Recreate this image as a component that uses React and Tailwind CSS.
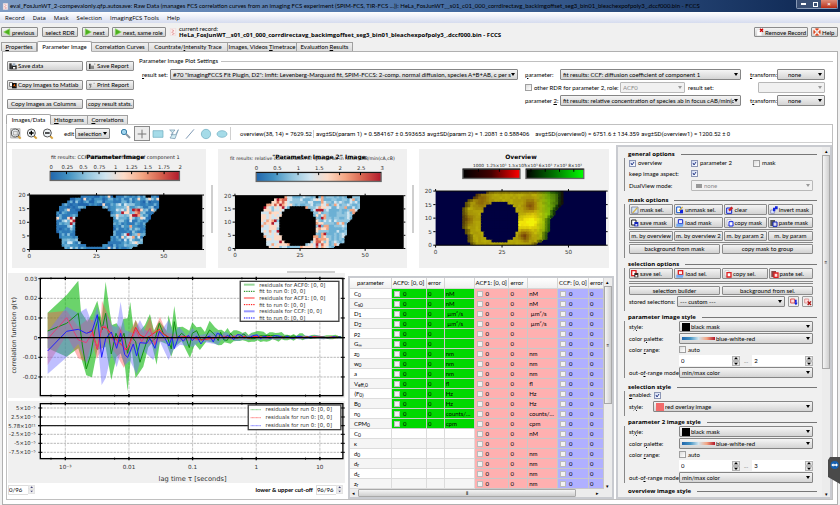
import React, { useId } from "react";

const RAMP = ["#2166ac", "#2f7ab8", "#4393c3", "#6cb0d4", "#92c5de", "#d1e5f0", "#fddbc7", "#f4a582", "#d6604d", "#b2182b"];
const LEFT = [19, 15, 14, 12, 11, 11, 10, 10, 10, 10, 10, 10, 10, 10, 11, 11, 12, 12, 12, 13];
const RIGHT = [48, 48, 48, 48, 48, 47, 46, 45, 45, 44, 43, 43, 43, 43, 43, 42, 42, 42, 40, 38];

function noise(a, b, seed) {
  const s = Math.sin(a * 127.1 + b * 311.7 + seed * 74.7) * 43758.5453;
  return s - Math.floor(s);
}

function inHole(c, r) {
  const dx = (c + 0.5 - 24) / 7.5;
  const dy = (r + 0.5 - 11.5) / 7.6;
  return dx * dx + dy * dy < 1;
}

function spot(c, r, x, y, s) {
  return Math.exp(-((c - x) ** 2 + (r - y) ** 2) / (s * s));
}

function diffusionCell(c, r) {
  const n = noise(c, r, 1);
  let v = 0.9 + n * n * 3.6;
  if (n > 0.96) v += 2;
  v += 8 * spot(c, r, 39, 6, 2.4) * (0.4 + n) + 8 * spot(c, r, 15, 9, 1.8) * (0.3 + n) + 6 * spot(c, r, 37, 14, 2) * n;
  v += 2.4 * spot(c, r, 33, 7, 3) + 2 * spot(c, r, 14, 18, 3) + 2.4 * spot(c, r, 38, 17, 3) + 2 * spot(c, r, 34, 4, 2);
  return RAMP[Math.min(9, Math.floor(v))];
}

function concentrationCell(c, r) {
  const n = noise(c, r, 5);
  let v = c < 20 ? 4.8 + n * 2.6 : 3 + n * 2.5;
  if (r < 4 && c < 22) v += 1.2;
  if (r > 15 && c < 36 && c > 25) v += 1.5;
  if (c > 30 && c < 35) v += n * 2.4;
  if (n > 0.96) v += 2;
  return RAMP[Math.min(9, Math.floor(v))];
}

function overviewCell(c, r) {
  const n = noise(c, r, 9);
  let g = 0.6 + n * 0.08;
  let red = 0.66 + n * 0.06;
  const edge = Math.min(c - LEFT[r], RIGHT[r] - 1 - c, r + 1);
  if (edge < 2) {
    g *= 0.5 + edge * 0.22;
    red *= 0.55 + edge * 0.2;
  }
  const glow = 0.28 * spot(c, r, 35, 11, 2.6) + 0.22 * spot(c, r, 31, 12, 2) + 0.12 * spot(c, r, 38, 9, 6);
  g += glow;
  red += glow;
  const dark = 0.35 * spot(c, r, 35, 5, 2.5) + 0.38 * spot(c, r, 33, 16, 2) + 0.25 * spot(c, r, 17, 3, 3) + 0.2 * spot(c, r, 12, 10, 2);
  g -= dark;
  red -= dark * 0.6;
  if (c > 37) red -= (c - 37) * 0.055;
  if (c > 42) g -= (c - 42) * 0.07;
  const k = (t) => Math.round(255 * Math.max(0.08, Math.min(0.95, t)));
  return `rgb(${k(red)},${k(g)},8)`;
}

function Cells({ x, y, w, h, color, ragged, hole = "#000" }) {
  const cw = w / 64;
  const ch = h / 20;
  const out = [];
  for (let r = 0; r < 20; r++) {
    for (let c = LEFT[r]; c < RIGHT[r]; c++) {
      const gap = inHole(c, r) || (ragged && r === 0 && (c === 31 || c === 43 || c === 44));
      out.push(
        <rect
          key={r * 64 + c}
          x={x + c * cw}
          y={y + r * ch}
          width={c === RIGHT[r] - 1 ? cw : cw + 3}
          height={r === 19 || c < LEFT[r + 1] || c >= RIGHT[r + 1] ? ch : ch + 3}
          fill={gap ? hole : color(c, r)}
        />
      );
    }
  }
  return <g>{out}</g>;
}

function PlotAxes({ x, y, w, h, step }) {
  const xs = [0, 25, 50];
  const ys = [20, 15, 10, 5, 0];
  return (
    <g fontSize="17" fill="#333">
      <path d={`M${x} ${y}H${x + w}M${x} ${y + h}H${x + w}`} stroke="#000" strokeWidth="3" />
      {xs.map((t) => (
        <g key={t}>
          <path d={`M${x + t * step} ${y - 6}v6M${x + t * step} ${y + h}v7`} stroke="#000" strokeWidth="3" />
          <text x={x + t * step} y={y + h + 27} textAnchor="middle">{t}</text>
        </g>
      ))}
      {ys.map((t, i) => (
        <g key={t}>
          <path d={`M${x - 7} ${y + (h * i) / 4}h7M${x + w} ${y + (h * i) / 4}h5`} stroke="#000" strokeWidth="3" />
          <text x={x - 11} y={y + (h * i) / 4 + 6} textAnchor="end">{t}</text>
        </g>
      ))}
    </g>
  );
}

function RampBar({ id, x, y, w, h, colors, ticks }) {
  return (
    <g>
      <defs>
        <linearGradient id={id}>
          {colors.map((c, i) => <stop key={i} offset={i / (colors.length - 1)} stopColor={c} />)}
        </linearGradient>
      </defs>
      <rect x={x} y={y} width={w} height={h} fill={`url(#${id})`} stroke="#666" strokeWidth="4" />
      <path d={`M${x} ${y}H${x + w}`} stroke="#111" strokeWidth="3" />
      {ticks.map((t) => <path key={t} d={`M${t} ${y}v8`} stroke="#000" strokeWidth="3" />)}
    </g>
  );
}

const BWR = ["#2166ac", "#4393c3", "#92c5de", "#d1e5f0", "#fddbc7", "#f4a582", "#d6604d", "#b2182b"];
const PLOT_FONT = "font-['DejaVu_Sans',sans-serif]";

function ParameterPlot() {
  const labels = ["0", "0.25", "0.5", "0.75", "1", "1.25", "1.5", "1.75", "2"];
  return (
    <svg viewBox="36 14 585 357" className={`block h-[119px] w-full ${PLOT_FONT}`} role="img" aria-label="Parameter Image">
      <text x="347" y="44" textAnchor="middle" fontSize="15" fill="#222">fit results: CCF: diffusion coefficient of component 1</text>
      <text x="347" y="44" textAnchor="middle" fontSize="18" fontWeight="bold">Parameter Image</text>
      <g fontSize="16" fill="#333">
        {labels.map((t, i) => <text key={t} x={154 + i * 48.5} y="74" textAnchor="middle">{t}</text>)}
      </g>
      <RampBar id="ramp-a" x={151} y={81} w={389} h={27} colors={BWR} ticks={[200, 249, 298, 347, 396, 445, 494]} />
      <rect x="88" y="152" width="521" height="164" />
      <Cells x={88} y={152} w={521} h={164} color={diffusionCell} ragged />
      <PlotAxes x={88} y={152} w={521} h={164} step={8.1} />
    </svg>
  );
}

function Parameter2Plot() {
  const labels = ["0", "0.5", "1", "1.5", "2", "2.5", "3"];
  return (
    <svg viewBox="654 14 567 357" className={`block h-[119px] w-full ${PLOT_FONT}`} role="img" aria-label="Parameter Image 2">
      <text x="690" y="48" fontSize="14" fill="#222">fit results: relative concentration of species ab in focus cAB/min(cA,cB)</text>
      <text x="958" y="45" textAnchor="middle" fontSize="18" fontWeight="bold">"Parameter Image 2" Image</text>
      <g fontSize="16" fill="#333">
        {labels.map((t, i) => <text key={t} x={770 + i * 63} y="77" textAnchor="middle">{t}</text>)}
      </g>
      <RampBar id="ramp-b" x={769} y={84} w={376} h={27} colors={BWR} ticks={[832, 895, 957, 1020, 1083]} />
      <rect x="705" y="154" width="508" height="159" />
      <Cells x={705} y={154} w={502} h={159} color={concentrationCell} ragged />
      <PlotAxes x={705} y={154} w={508} h={159} step={7.84} />
    </svg>
  );
}

function OverviewPlot() {
  return (
    <svg viewBox="327 14 573 357" className={`block h-[119px] w-full ${PLOT_FONT}`} role="img" aria-label="Overview">
      <text x="634" y="44" textAnchor="middle" fontSize="18" fontWeight="bold">Overview</text>
      <g fontSize="13" fill="#222" textAnchor="middle">
        <text x="506" y="67">1000</text>
        <text x="560" y="67">1.25×10³</text>
        <text x="622" y="67">1.5×10³</text>
        <text x="664" y="67">5×10³</text>
        <text x="708" y="67">6×10³</text>
        <text x="752" y="67">7×10³</text>
        <text x="797" y="67">8×10³</text>
      </g>
      <RampBar id="ramp-r" x={459} y={74} w={172} h={28} colors={["#000", "#400", "#f00"]} ticks={[506, 569]} />
      <RampBar id="ramp-g" x={649} y={74} w={174} h={28} colors={["#000", "#070", "#0f0"]} ticks={[664, 707, 750, 793]} />
      <rect x="377" y="140" width="513" height="163" fill="#000040" />
      <Cells x={377} y={140} w={513} h={163} color={overviewCell} hole="#000040" />
      <PlotAxes x={377} y={140} w={513} h={163} step={8} />
    </svg>
  );
}

/* Residual band outlines: upper edge, lower edge and centre curve of each channel. */
const GREEN_UP = "143,128 200,75 235,32 243,125 262,155 276,130 292,92 305,150 317,35 330,130 336,165 350,160 362,178 370,147 383,145 391,96 400,172 407,150 420,182 435,165 450,132 462,182 478,152 500,182 506,135 515,172 523,108 532,172 548,170 568,182 577,157 590,172 603,170 615,186 629,152 645,172 655,180";
const GREEN_DN = "655,226 640,218 620,214 600,240 585,222 570,264 545,214 523,232 514,260 500,222 480,214 470,284 455,220 445,232 430,290 407,325 395,240 383,364 375,290 362,250 350,260 334,330 317,230 292,240 276,322 259,316 235,235 200,260 143,235";
const BLUE_UP = "143,185 200,110 235,130 259,115 276,160 292,110 305,170 317,125 335,165 350,172 362,95 375,180 400,190 420,150 435,180 460,190 480,188 506,150 520,190 538,170 560,198 577,175 600,195 655,184";
const BLUE_DN = "655,224 600,214 580,230 540,224 520,240 506,270 480,215 460,270 430,242 410,312 390,272 375,286 362,250 350,292 335,250 317,325 305,345 292,205 276,252 259,280 235,222 200,262 143,312";
const RED_UP = "143,128 200,122 235,170 262,148 280,150 300,190 306,92 330,150 345,202 360,165 380,205 407,150 430,188 450,142 462,185 480,140 500,188 540,195 600,198 655,196";
const RED_DN = "655,210 600,212 540,212 500,210 450,222 410,222 390,250 372,294 350,255 320,215 290,266 276,214 259,276 235,265 200,195 143,285";

function tail(amp, seed, dir) {
  const pts = [];
  for (let x = 665; x <= 1025; x += 9) {
    const a = amp * Math.exp(-(x - 665) / 190) + 2;
    pts.push(`${x},${Math.round(203 + dir * a * (0.4 + noise(x, seed, 3)))}`);
  }
  return pts;
}

function band(up, dn, amp, seed) {
  return `${up} ${tail(amp, seed, -1).join(" ")} ${tail(amp * 0.6, seed + 1, 1).reverse().join(" ")} ${dn}`;
}

function curveTail(amp, seed) {
  const pts = [];
  for (let x = 662; x <= 1025; x += 10) {
    const a = amp * Math.exp(-(x - 662) / 160) + 1;
    pts.push(`${x},${Math.round(202 + a * (noise(x, seed, 2) - 0.6) * 2)}`);
  }
  return pts.join(" ");
}

const DECADES = [196, 387, 578, 769, 960];
const MINORS = [153, 344, 535, 726, 917];

function Frame({ y, h }) {
  return (
    <g>
      <rect x="121" y={y} width="908" height={h} fill="none" stroke="#000" strokeWidth="4" />
      {DECADES.map((x) => <path key={x} d={`M${x} ${y - 5}v10M${x} ${y + h - 5}v10`} stroke="#000" strokeWidth="4" />)}
      {MINORS.map((x) => <path key={x} d={`M${x} ${y - 3}v6M${x} ${y + h - 3}v6`} stroke="#000" strokeWidth="3" />)}
    </g>
  );
}

function CorrelationPlot() {
  const yTicks = [["0.03", 26], ["0.02", 85], ["0.01", 144], ["0", 203], ["-0.01", 262], ["-0.02", 321]];
  const legend = [
    ["residuals for ACF0: [0, 0]", "#99d699", 6, null],
    ["fit to run 0: [0, 0]", "#008000", 3, "4 3"],
    ["residuals for ACF1: [0, 0]", "#ff9999", 6, null],
    ["fit to run 0: [0, 0]", "#ff0000", 3, "4 3"],
    ["residuals for CCF: [0, 0]", "#9999ff", 6, null],
    ["fit to run 0: [0, 0]", "#0000ff", 3, "4 3"],
  ];
  return (
    <svg viewBox="24 9 1011 375" className={`block h-auto w-full ${PLOT_FONT}`} role="img" aria-label="correlation function">
      <rect x="24" y="9" width="1011" height="375" fill="#f0f0f0" />
      <rect x="121" y="25" width="908" height="352" fill="#fff" />
      <path d={DECADES.map((x) => `M${x} 25V377`).join("")} stroke="#c4c4c4" strokeWidth="3" strokeDasharray="9 3" />
      <path d={yTicks.map(([, y]) => `M121 ${y}H1029`).join("")} stroke="#b8b8b8" strokeWidth="3" strokeDasharray="7 3" />
      <polygon points={band(GREEN_UP, GREEN_DN, 26, 1)} fill="#00b400" fillOpacity="0.58" />
      <polygon points={band(RED_UP, RED_DN, 7, 5)} fill="#ff5050" fillOpacity="0.42" />
      <polygon points={band(BLUE_UP, BLUE_DN, 13, 8)} fill="#7070ff" fillOpacity="0.45" />
      <g fill="none" strokeWidth="3">
        <polyline stroke="#109010" points={`143,183 200,160 235,130 247,225 259,297 272,255 285,180 297,140 306,180 317,130 334,252 348,190 360,215 372,190 383,250 395,200 407,215 420,277 432,240 445,200 456,215 466,205 478,160 490,190 502,200 514,237 523,155 532,205 545,190 557,200 568,233 577,190 590,182 603,210 615,205 629,180 645,195 655,212 ${curveTail(12, 4)}`} />
        <polyline stroke="#ff2020" points={`262,190 276,180 292,238 306,170 320,175 345,205 380,240 393,210 400,190 407,172 420,195 440,205 478,178 490,192 510,204 560,200 605,210 655,202 ${curveTail(3, 8)}`} />
        <polyline stroke="#e0407a" points="143,207 200,143 235,210 259,218 276,190 292,236 306,170 317,168 332,200 350,225 362,180 374,240 386,230 407,180 425,215 450,175 465,225 480,180" />
        <polyline stroke="#2020ff" points={`143,243 200,184 235,178 259,190 276,184 292,134 305,262 317,206 334,186 350,235 362,190 374,253 383,263 400,222 410,258 420,218 440,220 450,206 465,235 478,184 495,205 507,228 516,200 523,236 537,198 550,214 565,196 577,212 590,198 603,222 615,205 629,198 640,216 652,190 ${curveTail(10, 2)}`} />
      </g>
      <path d="M114 203H1035" stroke="#000" strokeWidth="4" />
      <Frame y={25} h={352} />
      <g fontSize="17" fill="#333" textAnchor="end">
        {yTicks.map(([t, y]) => (
          <g key={t}>
            <path d={`M115 ${y}h12M1023 ${y}h12`} stroke="#000" strokeWidth="3" />
            <text x="112" y={y + 6}>{t}</text>
          </g>
        ))}
      </g>
      <text transform="translate(47 196) rotate(-90)" textAnchor="middle" fontSize="19" fill="#333">correlation function g(τ)</text>
      <rect x="721" y="34" width="296" height="120" fill="#fff" stroke="#444" strokeWidth="4" />
      <g fontSize="16" fill="#333">
        {legend.map(([t, color, sw, dash], i) => (
          <g key={i}>
            <path d={`M732 ${44 + i * 20}h32`} stroke={color} strokeWidth={sw} strokeDasharray={dash || undefined} />
            <text x="778" y={50 + i * 20}>{t}</text>
          </g>
        ))}
      </g>
    </svg>
  );
}

function ResidualPlot() {
  const yTicks = [["5×10⁻⁵", 39], ["2.5×10⁻⁵", 66], ["5.78×10²¹", 92], ["-2.5×10⁻⁵", 118], ["-5×10⁻⁵", 145], ["-7.5×10⁻⁵", 172]];
  const xLabels = ["10⁻³", "0.01", "0.1", "1", "10"];
  const legend = ["#99d699", "#ff9999", "#9999ff"];
  return (
    <svg viewBox="24 18 1011 246" className={`block h-auto w-full ${PLOT_FONT}`} role="img" aria-label="residuals">
      <rect x="24" y="18" width="1011" height="246" fill="#f0f0f0" />
      <rect x="121" y="26" width="908" height="165" fill="#fff" />
      <path d={DECADES.map((x) => `M${x} 26V191`).join("")} stroke="#c4c4c4" strokeWidth="3" strokeDasharray="9 3" />
      <path d={yTicks.map(([, y]) => `M121 ${y}H1029`).join("")} stroke="#b8b8b8" strokeWidth="3" strokeDasharray="7 3" />
      <path d="M114 92H1029" stroke="#222" strokeWidth="4" />
      <Frame y={26} h={165} />
      <g fontSize="16" fill="#333" textAnchor="end">
        {yTicks.map(([t, y]) => (
          <g key={t}>
            <path d={`M115 ${y}h12M1023 ${y}h12`} stroke="#000" strokeWidth="3" />
            <text x="107" y={y + 6}>{t}</text>
          </g>
        ))}
      </g>
      <g fontSize="17" fill="#333" textAnchor="middle">
        {xLabels.map((t, i) => <text key={t} x={DECADES[i]} y="222">{t}</text>)}
        <text x="578" y="257" fontSize="20">lag time τ [seconds]</text>
      </g>
      <rect x="745" y="30" width="278" height="74" fill="#fff" stroke="#444" strokeWidth="4" />
      <g fontSize="16" fill="#333">
        {legend.map((color, i) => (
          <g key={color}>
            <path d={`M752 ${44 + i * 24}h32`} stroke={color} strokeWidth="4" strokeDasharray="3 1" />
            <text x="797" y={48 + i * 24}>residuals for run 0: [0, 0]</text>
          </g>
        ))}
      </g>
    </svg>
  );
}

/* "&" before a letter marks its keyboard mnemonic. */
function Mn({ children }) {
  const i = children.indexOf("&");
  if (i < 0) return <span>{children}</span>;
  return <span>{children.slice(0, i)}<u>{children[i + 1]}</u>{children.slice(i + 2)}</span>;
}

function Btn({ children, icon, className = "" }) {
  return (
    <button type="button" className={`flex items-center gap-px overflow-hidden whitespace-nowrap rounded-[1px] border border-[#8b8b8b] bg-linear-to-b from-[#f4f4f4] to-[#d2d2d2] px-px ${className}`}>
      {icon}
      <span>{children}</span>
    </button>
  );
}

function Arrow({ muted }) {
  return (
    <svg viewBox="0 0 4 3" className="pointer-events-none h-[3px] w-[4px] shrink-0" aria-hidden="true">
      <path d="M0 0h4L2 3z" fill={muted ? "#999" : "#000"} />
    </svg>
  );
}

function Combo({ id, label, value, disabled, swatch, className = "" }) {
  return (
    <span className={`flex h-[11px] min-w-0 items-center rounded-[1px] border px-[2px] ${disabled ? "border-[#b8b8b8] bg-[#f1f1f1] text-[#8a8a8a]" : "border-[#858585] bg-linear-to-b from-[#f5f5f5] to-[#d4d4d4]"} ${className}`}>
      {swatch}
      <select id={id} aria-label={label} disabled={disabled} defaultValue={value} className="h-[9px] min-w-0 flex-1 appearance-none overflow-hidden text-clip whitespace-nowrap bg-transparent leading-[9px] opacity-100">
        <option>{value}</option>
      </select>
      <Arrow muted={disabled} />
    </span>
  );
}

function Tick({ id, label, name, checked, disabled, className = "" }) {
  return (
    <label className={`flex items-center gap-[2px] whitespace-nowrap ${className}`}>
      <span className="grid size-[7px] shrink-0">
        <input id={id} type="checkbox" aria-label={name} defaultChecked={checked} disabled={disabled} className="peer col-start-1 row-start-1 size-[7px] appearance-none border border-[#a0a0a0] bg-linear-to-br from-[#dcdcdc] to-white checked:border-[#8c96b4] checked:from-[#cfd8f0]" />
        <svg viewBox="0 0 7 7" className="pointer-events-none col-start-1 row-start-1 size-[7px] opacity-0 peer-checked:opacity-100" aria-hidden="true">
          <path d="M2 3 3 5 5 2" fill="none" stroke="#2b3f8c" strokeWidth="1" />
        </svg>
      </span>
      {label && <Mn>{label}</Mn>}
    </label>
  );
}

function Spin({ label, value, className = "" }) {
  return (
    <span className={`flex h-[11px] items-center bg-white ${className}`}>
      <input type="text" aria-label={label} defaultValue={value} className="h-[9px] w-0 min-w-0 flex-1 px-[2px] leading-[9px]" />
      <svg viewBox="0 0 24 30" className="h-[10px] w-[8px] shrink-0" aria-hidden="true">
        <path d="M1 1h22v12H1zM1 17h22v12H1z" fill="#e4e4e4" stroke="#888" strokeWidth="2" />
        <path d="M6 10h12L12 3zM6 20h12l-6 7z" />
      </svg>
    </span>
  );
}

function Tabs({ items, active }) {
  return (
    <div role="tablist" className="relative -mb-px flex h-[11px] items-end">
      {items.map(([name, w]) => (
        <button
          key={name}
          type="button"
          role="tab"
          aria-selected={name === active}
          className={`flex items-center justify-center whitespace-nowrap border ${w} ${name === active ? "h-[11px] rounded-t-[2px] border-[#a5a5a5] border-b-white bg-white" : "-ml-px mb-px h-[9px] border-[#a0a0a0] border-b-0 bg-linear-to-b from-[#f0f0f0] to-[#dadada]"}`}
        >
          <Mn>{name}</Mn>
        </button>
      ))}
    </div>
  );
}

function Mini({ kind, className = "size-[8px]" }) {
  const shapes = {
    play: <path d="M4 2 22 12 4 22z" fill="#4cb01e" stroke="#8bd460" strokeWidth="2" />,
    back: <path d="M20 2 2 12l18 10z" fill="#4cb01e" stroke="#8bd460" strokeWidth="2" />,
    doc: <><path d="M4 1h16v22H4z" fill="#fbeeee" stroke="#e3c9c9" /><path d="M8 5l7 3-7 5 8 4-7 3" stroke="#d88" fill="none" strokeWidth="2" /></>,
    disk: <><path d="M1 4h7v18H1z" fill="#333" /><path d="M7 10h16v12H7z" fill="#222" /><path d="M11 4h8v8h-8z" fill="#9ab" /><path d="M12 15h7v5h-7z" fill="#fff" /></>,
    report: <><path d="M3 5h5v16H3z" fill="#333" /><path d="M9 11h9v10H9z" fill="#888" /><path d="M18 4h4v5h-4z" fill="#bbb" /></>,
    matlab: <><path d="M1 3h10v14H1z" fill="#555" /><path d="M3 5h6v10H3z" fill="#fff" /><path d="M9 6h14v16H9z" fill="#111" /><path d="M12 16l5-8 3 10-4-3z" fill="#f60" /></>,
    print: <><path d="M3 8h8v3H7l4 4-5 7H4l3-7-4-3z" fill="#777" /><path d="M16 5h5v4h-5z" fill="#bbb" /></>,
    remove: <><path d="M3 6h14v17H3z" fill="#fff" stroke="#ddd" /><path d="M12 2l9 9m0-9-9 9" stroke="#c00" strokeWidth="4" /></>,
    help: <><circle cx="12" cy="12" r="8" fill="none" stroke="#e04a22" strokeWidth="6" /><path d="M4 4l5 5m6 6 5 5m0-16-5 5m-6 6-5 5" stroke="#fff" strokeWidth="4" /></>,
    mask: <><path d="M2 3h19v19H2z" fill="#d3e6f8" stroke="#668" strokeWidth="2" /><path d="M5 21 19 5" stroke="#d7b24a" strokeWidth="4" /></>,
    unmask: <><path d="M2 3h12v17H2z" fill="#fff" stroke="#15c" strokeWidth="3" /><path d="M12 11h9v11h-9z" fill="#12d" /><path d="M9 14 20 3" stroke="#d7b24a" strokeWidth="4" /></>,
    clear: <><path d="M2 6h15v16H2z" fill="#dce6ff" stroke="#12c" strokeWidth="3" /><path d="M9 14 19 4" stroke="#c22" strokeWidth="7" /></>,
    invert: <><path d="M2 12h11v10H2z" fill="#dfe9ff" stroke="#77a" strokeWidth="2" /><path d="M9 5h6V1h8v9h-7v6H9z" fill="#12d" /></>,
    save: <><path d="M2 3h13v15H2z" fill="#fff" stroke="#222" strokeWidth="3" /><path d="M10 9h12v13H10z" fill="#12b" /><path d="M13 15h6v5h-6z" fill="#dde" /></>,
    load: <><path d="M7 2h13v12H7z" fill="#eef" stroke="#12c" strokeWidth="3" /><path d="M1 14h22l-3 9H1z" fill="#74aaf0" /></>,
    copy: <><path d="M3 2h12v16H3z" fill="#fff" stroke="#aab" strokeWidth="2" /><path d="M9 8h12v13H9z" fill="#fff" stroke="#12d" strokeWidth="3" /></>,
    paste: <><path d="M1 3h14v18H1z" fill="#555" /><path d="M9 9h12v13H9z" fill="#dde" stroke="#12b" strokeWidth="3" /></>,
    saveR: <><path d="M2 2h13v15H2z" fill="#fff" stroke="#d22" strokeWidth="4" /><path d="M10 9h12v13H10z" fill="#322" /><path d="M13 15h6v5h-6z" fill="#fff" /></>,
    loadR: <><path d="M7 2h13v12H7z" fill="#fee" stroke="#d22" strokeWidth="4" /><path d="M1 14h22l-3 9H1z" fill="#74aaf0" /></>,
    copyR: <><path d="M3 2h12v16H3z" fill="#fff" stroke="#bbb" strokeWidth="2" /><path d="M9 8h12v13H9z" fill="#fff" stroke="#d22" strokeWidth="4" /></>,
    pasteR: <><path d="M1 3h14v18H1z" fill="#844" /><path d="M9 9h12v13H9z" fill="#fdd" stroke="#d22" strokeWidth="4" /></>,
    addSel: <><path d="M2 3h12v12H2z" fill="#fdd" stroke="#d55" strokeWidth="3" /><path d="M14 5h6v9h3l-5 8-6-8h4z" fill="#12d" /></>,
    delSel: <><path d="M2 3h12v12H2z" fill="#fdd" stroke="#d99" strokeWidth="3" /><path d="M11 10l10 11m0-11L11 21" stroke="#a11" strokeWidth="4" /></>,
  };
  return <svg viewBox="0 0 24 24" className={`shrink-0 ${className}`} aria-hidden="true">{shapes[kind]}</svg>;
}

function Zoomer({ sign }) {
  return (
    <svg viewBox="0 0 36 36" className="size-[12px]" aria-hidden="true">
      {sign === "fit" && <path d="M2 2h28v28H2z" fill="#ddd" stroke="#999" strokeWidth="2" />}
      <path d="M24 24l8 8" stroke="#d6a13c" strokeWidth="6" />
      <circle cx="16" cy="15" r="12" fill="#eef3f6" stroke="#555" strokeWidth="3" />
      {sign === "fit" && <path d="M10 10h12v11H10z" fill="#e8e8e8" stroke="#888" strokeWidth="2" />}
      {sign !== "fit" && <path d={sign === "in" ? "M9 15h14M16 8v14" : "M9 15h14"} stroke="#000" strokeWidth="4" />}
    </svg>
  );
}

function ToolButton({ label, children, pressed }) {
  return (
    <button type="button" aria-label={label} className={`flex h-[15px] w-[16px] items-center justify-center ${pressed ? "border border-[#8a8a8a] bg-[#ececec]" : ""}`}>
      <svg viewBox="0 0 36 36" className="size-[12px]" aria-hidden="true">{children}</svg>
    </button>
  );
}

function Heading({ title, className = "" }) {
  return (
    <h2 className={`flex items-center gap-[6px] font-bold leading-[7px] ${className}`}>
      <span className="ml-[4px] font-['Open_Sans',sans-serif]">{title}</span>
      <span className="h-px flex-1 bg-[#777]" />
    </h2>
  );
}

function Section({ title, children, className = "" }) {
  return (
    <section className={className}>
      <Heading title={title} />
      <div className="mr-[4px] flex flex-col border-l border-[#888] pl-[4px]">{children}</div>
    </section>
  );
}

const paletteSwatch = <span className="mr-px h-[3px] w-[33px] shrink-0 bg-[linear-gradient(90deg,#2166ac,#4393c3,#d1e5f0,#f4a582,#b2182b)]" />;

function ImageStyle({ title, high, className }) {
  const id = useId();
  return (
    <Section title={title} className={className}>
      <div className="grid grid-cols-[50px_1fr] items-center gap-y-px">
        <label htmlFor={id + "s"}><Mn>st&yle:</Mn></label>
        <Combo id={id + "s"} value="black mask" swatch={<span className="mr-px size-[8px] shrink-0 bg-black" />} />
        <label htmlFor={id + "p"}><Mn>color &palette:</Mn></label>
        <Combo id={id + "p"} value="blue-white-red" swatch={paletteSwatch} />
        <Mn>color &range:</Mn>
        <Tick label="auto" className="h-[9px]" />
        <span />
        <div className="flex items-center gap-[4px]">
          <Spin label="range minimum" value="0" className="flex-1" />
          <span className="text-[#777]">...</span>
          <Spin label="range maximum" value={high} className="flex-1" />
        </div>
        <label htmlFor={id + "m"} className="whitespace-nowrap"><Mn>out-o&f-range mode:</Mn></label>
        <Combo id={id + "m"} value="min/max color" />
      </div>
    </Section>
  );
}

function OptionsPanel() {
  return (
    <aside className="flex w-[216px] shrink-0 border-2 border-[#c9cbd0] bg-[#f0f0f0]">
      <div className="flex min-w-0 flex-1 flex-col pl-[6px] pr-[5px] pt-[4px]">
        <Section title="general options">
          <div className="grid h-[10px] grid-cols-[62px_62px_1fr] items-center">
            <Tick label="overview" checked />
            <Tick label="parameter 2" checked />
            <Tick label="mask" />
          </div>
          <div className="grid h-[11px] grid-cols-[62px_1fr] items-center"><label htmlFor="aspect">keep image aspect:</label><Tick id="aspect" checked /></div>
          <div className="mt-px grid grid-cols-[62px_1fr] items-center">
            <label htmlFor="dual">DualView mode:</label>
            <Combo id="dual" value="none" disabled swatch={<span className="mx-[2px] h-[4px] w-[6px] bg-[#999]" />} />
          </div>
        </Section>
        <Section title="mask options" className="mt-[6px]">
          <div className="grid grid-cols-[44fr_48fr_43fr_45fr] gap-x-px gap-y-[2px]">
            <Btn className="h-[11px]" icon={<Mini kind="mask" />}>mask sel.</Btn>
            <Btn className="h-[11px]" icon={<Mini kind="unmask" />}>unmask sel.</Btn>
            <Btn className="h-[11px]" icon={<Mini kind="clear" />}>clear</Btn>
            <Btn className="h-[11px]" icon={<Mini kind="invert" />}>invert mask</Btn>
            <Btn className="h-[11px]" icon={<Mini kind="save" />}>save mask</Btn>
            <Btn className="h-[11px]" icon={<Mini kind="load" />}>load mask</Btn>
            <Btn className="h-[11px]" icon={<Mini kind="copy" />}>copy mask</Btn>
            <Btn className="h-[11px]" icon={<Mini kind="paste" />}>paste mask</Btn>
          </div>
          <hr className="my-px border-[#888]" />
          <div className="grid grid-cols-[44fr_48fr_43fr_45fr] gap-px">
            {["m. by overview", "m. by overview 2", "m. by param 2", "m. by param"].map((t) => (
              <Btn key={t} className="h-[10px] justify-center">{t}</Btn>
            ))}
          </div>
          <hr className="my-px border-[#888]" />
          <div className="mb-[4px] grid grid-cols-2 gap-[2px]">
            <Btn className="h-[10px] justify-center">background from mask</Btn>
            <Btn className="h-[10px] justify-center">copy mask to group</Btn>
          </div>
        </Section>
        <Section title="selection options" className="mt-[3px]">
          <div className="grid grid-cols-[44fr_46fr_45fr_44fr] gap-px">
            <Btn className="h-[11px]" icon={<Mini kind="saveR" />}>save sel.</Btn>
            <Btn className="h-[11px]" icon={<Mini kind="loadR" />}>load sel.</Btn>
            <Btn className="h-[11px]" icon={<Mini kind="copyR" />}>copy sel.</Btn>
            <Btn className="h-[11px]" icon={<Mini kind="pasteR" />}>paste sel.</Btn>
          </div>
          <hr className="my-[2px] h-[3px] border-b border-[#888]" />
          <div className="grid grid-cols-2 gap-[2px]">
            <Btn className="h-[9px] justify-center">selection builder</Btn>
            <Btn className="h-[9px] justify-center">background from sel.</Btn>
          </div>
          <div className="mb-[4px] mt-px flex items-center gap-[3px]">
            <label htmlFor="stored" className="w-[45px] whitespace-nowrap">stored selections:</label>
            <Combo id="stored" value="--- custom ---" className="flex-1" />
            <button type="button" aria-label="add selection" className="flex size-[11px] items-center justify-center rounded-[1px] border border-[#999] bg-[#eee]"><Mini kind="addSel" /></button>
            <button type="button" aria-label="delete selection" className="flex size-[11px] items-center justify-center rounded-[1px] border border-[#999] bg-[#eee]"><Mini kind="delSel" /></button>
          </div>
        </Section>
        <ImageStyle title="parameter image style" high="2" className="mt-[3px]" />
        <Section title="selection style" className="mt-[6px]">
          <div className="flex h-[8px] items-center gap-[3px]"><label htmlFor="selon"><Mn>&enabled:</Mn></label><Tick id="selon" checked /></div>
          <div className="mb-[4px] mt-[2px] grid grid-cols-[24px_1fr] items-center">
            <label htmlFor="selstyle"><Mn>st&yle:</Mn></label>
            <Combo id="selstyle" value="red overlay image" swatch={<span className="mr-px size-[8px] shrink-0 bg-[#f26b6b]" />} />
          </div>
        </Section>
        <ImageStyle title="parameter 2 image style" high="3" className="mt-[3px]" />
        <Heading title="overview image style" className="mt-[5px]" />
      </div>
      <div className="flex w-[8px] shrink-0 flex-col items-center bg-[#ececec]">
        <span className="py-[2px] text-[5px] leading-[4px]">▴</span>
        <span className="flex h-[214px] w-full items-center justify-center border border-[#a9a9a9] bg-linear-to-r from-[#f5f5f5] to-[#cfcfcf] text-[5px]">≡</span>
        <span className="mt-auto py-px text-[5px] leading-[4px]">▾</span>
      </div>
    </aside>
  );
}

const ROWS = [
  ["C", "0", "nM", 1], ["C", "s0", "nM", 1], ["D", "1", "\u00a0µm²/s", 1], ["D", "2", "\u00a0µm²/s", 1], ["ρ", "2", "", 1],
  ["G", "∞", "", 1], ["z", "0", "nm", 1], ["w", "0", "nm", 1], ["a", "", "nm", 1], ["V", "eff,0", "fl", 1],
  ["⟨F", "0⟩", "Hz", 1], ["B", "0", "Hz", 1], ["n", "0", "counts/...", 1], ["CPM", "0", "cpm", 1], ["C", "0", "nM", 0],
  ["κ", "", "", 0], ["d", "0", "nm", 0], ["d", "r", "nm", 0], ["d", "c", "nm", 0], ["z", "r", "nm", 0],
];

function ValueCells({ fill, unit, name, noUnit }) {
  return (
    <>
      <td className={`${fill} border-b border-r border-[#c8c8c8] p-0 pl-[2px]`}>
        <label className="flex items-center gap-[3px]">
          <input type="checkbox" aria-label={`fix ${name}`} className="size-[6px] appearance-none border border-[#bbb] bg-[#f2f2f2]" />0
        </label>
      </td>
      <td className={`${fill} border-b border-r border-[#c8c8c8] p-0 pl-px`}>0</td>
      {!noUnit && <td className={`${fill} border-b border-r border-[#c8c8c8] p-0 pl-px`}>{unit}</td>}
    </>
  );
}

function ResultTable() {
  const blank = "border-b border-r border-[#dcdcdc] p-0";
  return (
    <div className="mt-[3px] flex flex-col self-start border-2 border-[#c9cbd0] bg-white">
      <div className="flex">
        <table className="min-w-0 flex-1 table-fixed border-separate border-spacing-0 text-[6px]">
          <colgroup>
            <col className="w-[43px]" /><col className="w-[35px]" /><col className="w-[18px]" /><col className="w-[30px]" />
            <col className="w-[35px]" /><col className="w-[19px]" /><col className="w-[30px]" /><col className="w-[31px]" /><col className="w-[15px]" />
          </colgroup>
          <thead>
            <tr className="h-[11px] bg-linear-to-b from-white to-[#eee] text-left">
              {["parameter", "ACF0: [0, 0]", "error", "", "ACF1: [0, 0]", "error", "", "CCF: [0, 0]", "error"].map((t, i) => (
                <th key={i} scope="col" className={`whitespace-nowrap border-b border-r border-[#d5d5d5] p-0 font-normal ${i === 0 ? "text-center" : "pl-px"}`}>{t}</th>
              ))}
            </tr>
          </thead>
          <tbody>
            {ROWS.map(([n, sub, unit, on], i) => (
              <tr key={i} className={`h-[10px] leading-[8px] ${i % 2 ? "bg-[#f5f5f5]" : "bg-white"}`}>
                <th scope="row" className="whitespace-nowrap border-b border-r border-[#dcdcdc] p-0 pl-[4px] text-left font-normal">
                  {n}<sub className="text-[5px]">{sub}</sub>
                </th>
                {on ? <ValueCells fill="bg-[#00d800]" unit={unit} name={`${n}${sub} ACF0`} /> : <><td className={blank} /><td className={blank} /><td className={blank} /></>}
                <ValueCells fill="bg-[#ffb0b0]" unit={unit} name={`${n}${sub} ACF1`} />
                <ValueCells fill="bg-[#b0b0ff]" name={`${n}${sub} CCF`} noUnit />
              </tr>
            ))}
          </tbody>
        </table>
        <div className="flex w-[8px] shrink-0 flex-col items-center bg-[#ececec]">
          <span className="py-[2px] text-[5px] leading-[4px]">▴</span>
          <span className="flex h-[118px] w-full items-center justify-center border border-[#a9a9a9] bg-linear-to-r from-[#f5f5f5] to-[#cfcfcf] text-[5px]">≡</span>
          <span className="mt-auto py-px text-[5px] leading-[4px]">▾</span>
        </div>
      </div>
      <div className="flex h-[8px] items-center bg-[#ececec] text-[5px] leading-[6px]">
        <span className="w-[8px] text-center">◂</span>
        <span className="h-[8px] w-5/6 rounded-[1px] border border-[#a9a9a9] bg-linear-to-b from-[#f5f5f5] to-[#cfcfcf] text-center">⦀</span>
        <span className="ml-auto w-[16px]">▸</span>
      </div>
    </div>
  );
}

function CutOff({ label, value }) {
  return (
    <span className="flex items-center">
      <input type="text" aria-label={label} defaultValue={value} className="h-[10px] w-[20px] border-y border-l border-[#ddd] bg-white leading-[8px]" />
      <svg viewBox="0 0 21 27" className="h-[9px] w-[7px]" aria-hidden="true">
        <path d="M1 1h19v11H1zM1 14h19v12H1z" fill="#eee" stroke="#bbb" />
        <path d="M7 9h8l-4-5zM7 17h8l-4 5z" fill="#447" />
      </svg>
    </span>
  );
}

function Splitter() {
  return <span className="flex w-[12px] shrink-0 items-center justify-center"><span className="h-[48px] w-[2px] bg-[#cfcfcf]" /></span>;
}

export default function App() {
  return (
    <div className="min-h-screen w-full overflow-x-hidden bg-[#f0f0f0] font-['Lato','Liberation_Sans',sans-serif] text-[6px] leading-[8px] text-black">
      <header className="flex h-[12px] items-center bg-linear-to-r from-[#7f9cc4] via-[#4a72a8] to-[#0c2550] pl-[2px]">
        <Mini kind="doc" className="size-[7px]" />
        <h1 className="min-w-0 flex-1 truncate pl-px text-black">
          eval_FosJunWT_2-compevalonly.qfp.autosave: Raw Data (manages FCS correlation curves from an imaging FCS experiment (SPIM-FCS, TIR-FCS ...)): HeLa_FosJunWT__s01_c01_000_corrdirectavg_backimgoffset_seg3_bin01_bleachexpofpoly3_.dccf000.bin - FCCS
        </h1>
        <div className="mr-[2px] flex h-[9px] self-start overflow-hidden rounded-b-[2px] border border-t-0 border-[#8899b5] text-white">
          <button type="button" aria-label="Minimize" className="flex w-[12px] items-center justify-center bg-[#3a4f74]"><span className="h-[2px] w-[5px] bg-white" /></button>
          <button type="button" aria-label="Restore" className="flex w-[12px] items-center justify-center bg-[#3a4f74]"><span className="size-[5px] border border-white" /></button>
          <button type="button" aria-label="Close" className="w-[16px] bg-linear-to-b from-[#dd8a76] to-[#b92a12] text-center font-bold leading-[8px]">×</button>
        </div>
      </header>

      <nav className="flex h-[11px] items-center gap-[8px] bg-linear-to-b from-white to-[#d6dcef] pl-[5px] font-['Open_Sans',sans-serif]">
        {["Record", "Data", "Mask", "Selection", "ImagingFCS Tools", "Help"].map((t) => <button key={t} type="button">{t}</button>)}
      </nav>

      <div className="flex h-[18px] items-center pl-px pr-[2px] leading-[7px]">
        <Btn className="h-[10px] w-[37px]" icon={<Mini kind="back" />}>previous</Btn>
        <Btn className="ml-[4px] h-[10px] w-[36px] justify-center">select RDR</Btn>
        <Btn className="ml-[4px] h-[10px] w-[27px]" icon={<Mini kind="play" />}>next</Btn>
        <Btn className="ml-[3px] h-[10px] w-[54px]" icon={<Mini kind="play" />}>next, same role</Btn>
        <Mini kind="doc" className="ml-[3px] size-[8px]" />
        <div className="ml-[2px] min-w-0 flex-1 whitespace-nowrap">
          <p>current record:</p>
          <p className="truncate font-['Open_Sans',sans-serif] font-bold">HeLa_FosJunWT__s01_c01_000_corrdirectavg_backimgoffset_seg3_bin01_bleachexpofpoly3_.dccf000.bin - FCCS</p>
        </div>
        <Btn className="h-[10px] w-[54px]" icon={<Mini kind="remove" />}>Remove Record</Btn>
        <Btn className="ml-[3px] h-[10px] w-[27px]" icon={<Mini kind="help" />}>Help</Btn>
      </div>

      <main className="mx-[2px]">
        <Tabs
          active="Parameter Image"
          items={[["&Properties", "w-[36px]"], ["Parameter Image", "w-[55px]"], ["Correlation Curves", "w-[58px]"], ["Countrate/&Intensity Trace", "w-[80px]"], ["Images, Videos &Timetrace", "w-[70px]"], ["Evaluation &Results", "w-[57px]"]]}
        />
        <div className="border border-[#b0b0b0] bg-white pb-[4px] pl-[3px] pr-[4px]">
          <div className="flex h-[62px] gap-[5px] pl-px pt-[5px]">
            <div className="grid shrink-0 grid-cols-[76px_48px] content-start gap-x-[3px] gap-y-[9px] pt-[4px]">
              <Btn className="h-[10px]" icon={<Mini kind="disk" />}>Save data</Btn>
              <Btn className="h-[10px]" icon={<Mini kind="report" />}>Save Report</Btn>
              <Btn className="h-[10px]" icon={<Mini kind="matlab" />}>Copy Images to Matlab</Btn>
              <Btn className="h-[10px]" icon={<Mini kind="print" />}>Print Report</Btn>
              <Btn className="h-[10px] pl-[3px]">Copy Images as Columns</Btn>
              <Btn className="h-[10px]">copy result stats.</Btn>
            </div>
            <section className="min-w-0 flex-1">
              <h2 className="flex items-center gap-[3px] leading-[8px]">
                <span>Parameter Image Plot Settings</span>
                <span className="h-px flex-1 bg-[#c0c0c0]" />
              </h2>
              <div className="mr-[8px] mt-[4px] flex items-start gap-[7px]">
                <div className="flex min-w-0 flex-1 items-center pl-[3px]">
                  <label htmlFor="rs" className="w-[28px] shrink-0"><Mn>&result set:</Mn></label>
                  <Combo id="rs" className="flex-1" value={'#70 "ImagingFCCS Fit Plugin, D2": lmfit: Levenberg-Marquard fit, SPIM-FCCS:  2-comp. normal diffusion, species A+B+AB, c per species, D1,'} />
                </div>
                <div className="flex w-[300px] shrink-0 flex-col gap-[2px]">
                  <div className="flex items-center">
                    <label htmlFor="p1" className="w-[35px]"><Mn>&parameter:</Mn></label>
                    <Combo id="p1" className="w-[181px]" value="fit results: CCF: diffusion coefficient of component 1" />
                    <label htmlFor="t1" className="ml-[9px] w-[27px]"><Mn>&transform:</Mn></label>
                    <Combo id="t1" className="flex-1 pl-[10px]" value="none" />
                  </div>
                  <div className="flex items-center">
                    <Tick label="other RDR for parameter 2, role:" className="w-[95px]" />
                    <Combo label="role" disabled value="ACF0" className="w-[65px]" />
                    <label htmlFor="rs2" className="ml-[3px]">result set:</label>
                    <Combo id="rs2" disabled value="" className="ml-auto w-[67px]" />
                  </div>
                  <div className="flex items-center">
                    <label htmlFor="p2" className="w-[35px] whitespace-nowrap"><Mn>parameter &2:</Mn></label>
                    <Combo id="p2" className="w-[181px]" value="fit results: relative concentration of species ab in focus cAB/min(cA,cB)" />
                    <label htmlFor="t2" className="ml-[9px] w-[27px]"><Mn>t&ransform:</Mn></label>
                    <Combo id="t2" className="flex-1 pl-[10px]" value="none" />
                  </div>
                </div>
              </div>
            </section>
          </div>

          <Tabs active="Images/Data" items={[["Images/Data", "w-[45px]"], ["&Histograms", "w-[38px]"], ["&Correlations", "w-[41px]"]]} />
          <div className="border border-[#c0c0c0]">
            <div className="flex h-[18px] items-center border-b border-[#d0d0d0] pl-[3px]">
              <button type="button" aria-label="zoom to fit" className="w-[16px]"><Zoomer sign="fit" /></button>
              <button type="button" aria-label="zoom in" className="w-[16px]"><Zoomer sign="in" /></button>
              <button type="button" aria-label="zoom out" className="w-[16px]"><Zoomer sign="out" /></button>
              <label htmlFor="edit" className="ml-[6px] w-[11px] whitespace-nowrap">edit</label>
              <Combo id="edit" value="selection" className="w-[35px]" />
              <div className="ml-[8px] flex">
                <ToolButton label="eyedropper"><path d="M18 18l12 12" stroke="#8a96a0" strokeWidth="6" /><circle cx="12" cy="12" r="8" fill="#9fd4ee" stroke="#3c7fa8" strokeWidth="3" /></ToolButton>
                <ToolButton label="crosshair" pressed><path d="M18 5v26M5 18h26" stroke="#777" strokeWidth="3" /></ToolButton>
                <ToolButton label="rectangle"><path d="M3 8h30v20H3z" fill="#a5dbe8" stroke="#6aa9bd" strokeWidth="2" /></ToolButton>
                <ToolButton label="polygon"><path d="M5 6h16L9 20h14L31 5 21 32 6 30l9-14z" fill="#d3edf3" stroke="#6b8ea8" strokeWidth="2" /></ToolButton>
                <ToolButton label="line"><path d="M6 32 30 4" stroke="#7f9ab5" strokeWidth="3" /></ToolButton>
                <ToolButton label="circle"><circle cx="18" cy="18" r="14" fill="#a5dbe8" stroke="#6aa9bd" strokeWidth="2" /></ToolButton>
                <ToolButton label="ellipse"><ellipse cx="18" cy="18" rx="15" ry="10" fill="#a5dbe8" stroke="#6aa9bd" strokeWidth="2" /></ToolButton>
              </div>
              <span className="h-[13px] w-px bg-[#d0d0d0]" />
              <div className="flex whitespace-nowrap pl-[9px] font-['Roboto',sans-serif]">
                <p className="border-r border-[#ccc] pr-px">overview(38, 14) = 7629.52</p>
                <p className="ml-[2px]">avg±SD(param 1) = 0.584167 ± 0.593653</p>
                <p className="ml-[2px]">avg±SD(param 2) = 1.2081 ± 0.588406</p>
                <p className="ml-[6px]">avg±SD(overview0) = 6751.6 ± 134.359</p>
                <p className="ml-[2px]">avg±SD(overview1) = 1200.52 ± 0</p>
              </div>
            </div>

            <div className="flex gap-[2px] pl-px pt-[2px]">
              <div className="min-w-0 flex-1">
                <div className="flex pl-[4px] pr-[5px] pt-[4px]">
                  <div className="flex-[195] bg-[#f0f0f0]"><ParameterPlot /></div>
                  <Splitter />
                  <div className="flex-[189] bg-[#f0f0f0]"><Parameter2Plot /></div>
                  <Splitter />
                  <div className="flex-[191] bg-[#f0f0f0]"><OverviewPlot /></div>
                </div>
                <div className="flex h-[5px] items-end justify-center"><span className="h-[2px] w-[48px] bg-[#cfcfcf]" /></div>
                <div className="grid grid-cols-[338fr_267fr] gap-[3px]">
                  <div>
                    <CorrelationPlot />
                    <div className="mt-[3px]"><ResidualPlot /></div>
                    <div className="flex h-[14px] items-center justify-between pr-[2px]">
                      <CutOff label="lower cut-off" value="0/96" />
                      <div className="flex items-center gap-[3px]">
                        <strong>lower &amp; upper cut-off</strong>
                        <CutOff label="upper cut-off" value="96/96" />
                      </div>
                    </div>
                  </div>
                  <ResultTable />
                </div>
              </div>
              <OptionsPanel />
            </div>
          </div>
        </div>
      </main>

      <button type="button" aria-label="TeamViewer" className="absolute right-0 top-[457px]">
        <svg viewBox="0 0 39 81" className="h-[27px] w-[13px]" aria-hidden="true">
          <path d="M9 0h30v81L3 60V9z" fill="#4a4a4a" />
          <circle cx="23" cy="24" r="12" fill="#1560b0" />
          <path d="M13 24l6-5v3h8v-3l6 5-6 5v-3h-8v3z" fill="#fff" />
        </svg>
      </button>
    </div>
  );
}
